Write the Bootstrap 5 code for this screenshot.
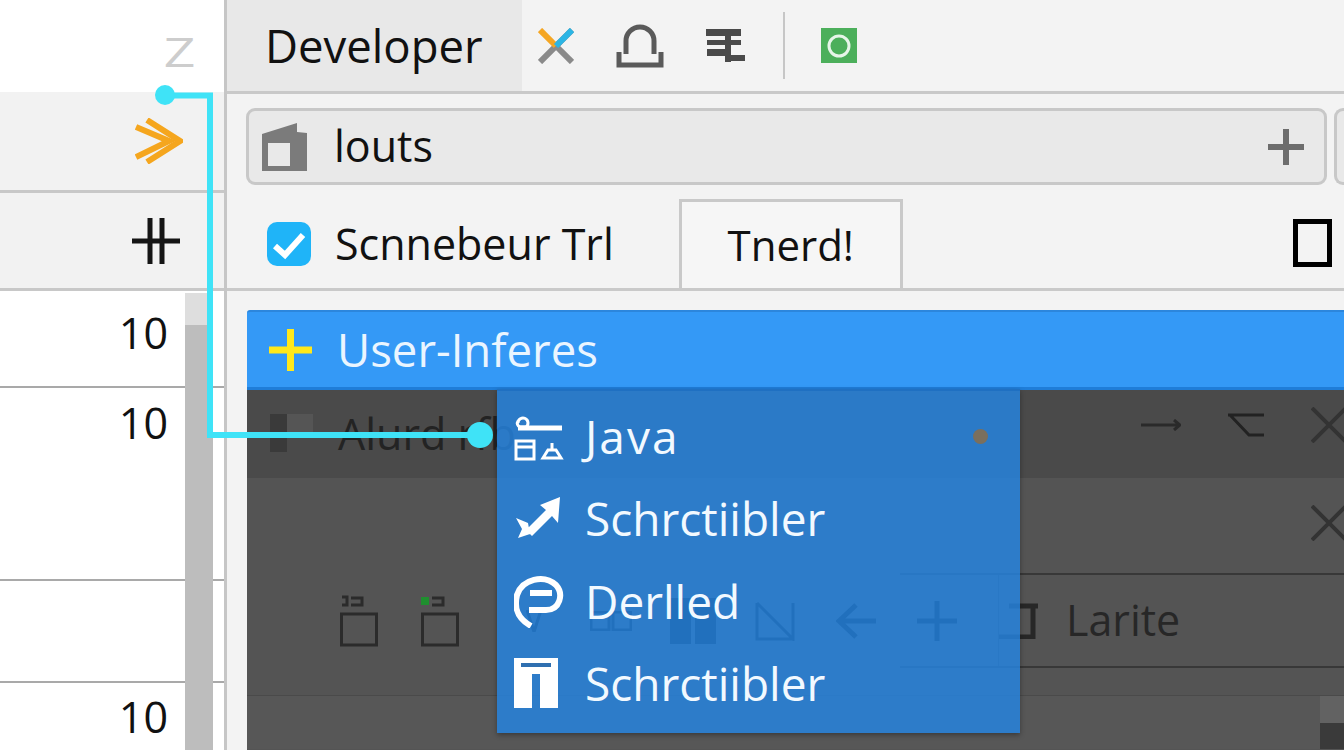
<!DOCTYPE html>
<html lang="en">
<head>
  <meta charset="UTF-8" />
  <meta name="viewport" content="width=device-width, initial-scale=1.0"/>
  <title>Developer</title>
  <link href="https://cdn.jsdelivr.net/npm/bootstrap@5.3.0/dist/css/bootstrap.min.css" rel="stylesheet"/>
  <style>
    html, body { height: 750px; overflow: hidden; }
    body { font-family: "Open Sans", "Noto Sans", sans-serif; background: #f3f3f3; color: #111; font-size: 43px; position: relative; }
    svg { display: block; flex: none; }
    .side-col { width: 224px; flex: none; position: relative; background: #fff; }
    .main-col { flex: 1; min-width: 0; border-left: 3px solid #c6c6c6; }
    .side-top { height: 92px; padding: 26px 29px 0 0; color: #cdcdcd; font-size: 41px; line-height: 50px; }
    .side-z { display: inline-block; transform: scaleX(1.35); transform-origin: right center; }
    .side-tool { background: #f2f2f2; border-bottom: 3px solid #c8c8c8; padding-right: 41px; }
    .side-tool.one { height: 101px; }
    .side-tool.two { height: 98px; padding-right: 44px; }
    .num-row { border-bottom: 2px solid #a9a9a9; padding: 14px 56px 0 0; line-height: 56px; font-size: 43px; }
    .num-row.r1 { height: 97px; }
    .num-row.r2 { height: 193px; padding-top: 7px; }
    .num-row.r3 { height: 102px; }
    .num-row.r4 { height: 70px; padding-top: 6px; border: 0; }
    .scroll-track { position: absolute; left: 185px; top: 293px; bottom: 0; width: 28px; background: #bdbdbd; }
    .scroll-track::before { content: ""; display: block; height: 32px; background: #dedede; }
    .top-bar { height: 94px; border-bottom: 3px solid #c9c9c9; }
    .dev-tab { width: 295px; background: #e8e8e8; padding-left: 38px; line-height: 91px; font-size: 45.5px; }
    .tool-sep { width: 2px; height: 67px; background: #c6c6c6; }
    .field-row { height: 91px; padding: 14px 0 0 19px; gap: 7px; }
    .field-box { height: 77px; background: #e9e9e9; border: 3px solid #c8c8c8; border-radius: 9px; }
    .field-box.wide { width: 1081px; padding: 0 20px 0 13px; }
    .field-box.rest { flex: 1; border-right: 0; border-radius: 9px 0 0 9px; }
    .field-label { margin-left: 26px; }
    .tab-row { height: 106px; border-bottom: 3px solid #c9c9c9; padding: 14px 12px 0 40px; }
    .tab-check { margin-right: 24px; margin-top: 23px; }
    .tab-label { margin-top: 13px; }
    .tab-box { width: 224px; height: 89px; margin-left: 65px; background: #f6f6f6; border: 3px solid #c9c9c9; border-bottom: 0; text-align: center; line-height: 86px; font-size: 42px; }
    .panel-wrap { padding: 19px 0 0 20px; }
    .blue-bar { height: 80px; background: #3499f6; border-top: 2px solid #2c86dc; border-bottom: 3px solid #1f7dd8; color: #eaf5ff; padding-left: 22px; gap: 25px; border-radius: 3px 0 0 0; font-size: 45.5px; }
    .dark-panel { position: relative; height: 361px; background: #545454; color: #232323; }
    .dark-title { height: 88px; background: #4a4a4a; padding-left: 23px; gap: 25px; }
    .title-right { margin-left: auto; gap: 47px; margin-right: -3px; margin-bottom: 18px; }
    .close-row { height: 95px; }
    .close-row svg { margin-right: -3px; margin-bottom: 6px; }
    .icon-row { height: 95px; padding-left: 93px; }
    .icon-row .cell { width: 81px; }
    .icon-row .cell:nth-child(3) { width: 88px; }
    .icon-row .cell:nth-child(4) { width: 80px; }
    .icon-row .cell:nth-child(5) { width: 85px; }
    .line-seg { flex: 1; align-self: stretch; margin-left: -17px; padding-left: 17px; border-top: 2px solid #383838; border-bottom: 2px solid #383838; }
    .line-cell { width: 82px; align-self: stretch; border-right: 1px solid #3c3c3c; }
    .larite { margin-left: 26px; color: #272727; font-size: 43px; }
    .foot-row { height: 28px; border-bottom: 1px solid #4a4a4a; }
    .foot-fill { height: 53px; background: #575757; }
    .foot-side { width: 24px; background: #3a3a3a; }
    .foot-side::before { content: ""; display: block; height: 27px; background: #626262; }
    .pop-menu { position: absolute; left: 250px; top: -1px; width: 523px; height: 344px; background: rgba(37, 133, 227, .82); border-top: 2px solid #1f70c2; box-shadow: 0 2px 5px rgba(0,0,0,.35); color: #f2f9ff; z-index: 3; font-size: 46px; }
    .pop-item { padding-left: 17px; gap: 21px; }
    .pop-item.a { height: 90px; }
    .pop-item.a span { letter-spacing: 2px; }
    .pop-item.b { height: 74px; }
    .pop-item.c { height: 92px; }
    .pop-item.d { height: 72px; }
    .pop-item .ico { width: 50px; }
    .pop-dot { margin-left: auto; margin-right: 32px; width: 15px; height: 15px; border-radius: 50%; background: #7a6f5d; }
    .wire { position: absolute; left: 0; top: 0; z-index: 2; pointer-events: none; }
  </style>
</head>
<body>
  <div class="d-flex">
    <div class="side-col">
      <div class="side-top text-end"><span class="side-z">Z</span></div>
      <div class="side-tool one d-flex align-items-center justify-content-end">
        <svg width="48" height="46" viewBox="0 0 48 46" fill="none" stroke="#f5a61e" stroke-width="6"><path d="M1 9 34 23 1 39"/><path d="M12 2 45 23 12 44"/></svg>
      </div>
      <div class="side-tool two d-flex align-items-center justify-content-end">
        <svg width="48" height="46" viewBox="0 0 48 46" fill="none" stroke="#151515" stroke-width="5"><path d="M0 23H48"/><path d="M18 0V46"/><path d="M30 0V46"/></svg>
      </div>
      <div class="num-row r1 text-end">10</div>
      <div class="num-row r2 text-end">10</div>
      <div class="num-row r3"></div>
      <div class="num-row r4 text-end">10</div>
      <div class="scroll-track"></div>
    </div>

    <div class="main-col">
      <div class="top-bar d-flex align-items-center">
        <div class="dev-tab align-self-stretch">Developer</div>
        <svg class="ms-3" width="36" height="36" viewBox="0 0 36 36" fill="none" stroke-width="6"><path d="M2 34 34 2" stroke="#8a8a8a"/><path d="M2 2 18 18" stroke="#f5a623"/><path d="M18 18 34 34" stroke="#8a8a8a"/><path d="M18 18 34 2" stroke="#2bb5e5"/></svg>
        <svg style="margin-left:42px" width="48" height="44" viewBox="0 0 48 44" fill="none" stroke="#5a5a5a" stroke-width="5"><path d="M10 30V17a14 14 0 0 1 28 0V30"/><path d="M3 28V41H45V28"/></svg>
        <svg style="margin-left:41px" width="40" height="36" viewBox="0 0 40 36" fill="#4a4a4a"><path d="M1 1H36V8H1ZM2 12H36V17H2ZM2 21H24V28H2ZM20 4H26V34H20ZM26 27H40V33H26Z"/></svg>
        <div class="tool-sep" style="margin-left:38px"></div>
        <svg style="margin-left:36px" width="36" height="35" viewBox="0 0 36 35"><rect width="36" height="35" fill="#4caf5b"/><circle cx="18" cy="18" r="10" fill="none" stroke="#e6f5e8" stroke-width="3"/></svg>
      </div>

      <div class="field-row d-flex">
        <div class="field-box wide d-flex align-items-center">
          <svg width="46" height="48" viewBox="0 0 46 48" fill="#7b7b7b"><path d="M0 11 35 0V9L45 10V48H0ZM6 20V43H28V20Z"/></svg>
          <span class="field-label">louts</span>
          <svg class="ms-auto" width="36" height="36" viewBox="0 0 36 36" fill="#6d6d6d"><path d="M15 0H21V15H36V21H21V36H15V21H0V15H15Z"/></svg>
        </div>
        <div class="field-box rest"></div>
      </div>

      <div class="tab-row d-flex align-items-start">
        <svg class="tab-check" width="44" height="44" viewBox="0 0 44 44"><rect width="44" height="44" rx="10" fill="#1fb4f8"/><path d="M8 24 18 33 36 13" fill="none" stroke="#fff" stroke-width="6"/></svg>
        <span class="tab-label">Scnnebeur Trl</span>
        <div class="tab-box">Tnerd!</div>
        <svg class="ms-auto" style="margin-top:20px" width="39" height="48" viewBox="0 0 39 48"><rect x="2.5" y="2.5" width="34" height="43" fill="none" stroke="#000" stroke-width="5"/></svg>
      </div>

      <div class="panel-wrap">
        <div class="blue-bar d-flex align-items-center">
          <svg width="43" height="42" viewBox="0 0 43 42" fill="#ffe81a"><path d="M18 0H25V17.500H43V24.500H25V42H18V24.500H0V17.500H18Z"/></svg>
          <span>User-Inferes</span>
        </div>
        <div class="dark-panel">
          <div class="dark-title d-flex align-items-center">
            <svg width="43" height="40" viewBox="0 0 43 40"><rect width="17" height="38" fill="#3a3a3a"/><rect x="17" width="26" height="22" fill="#555"/></svg>
            <span>Alurd rfb</span>
            <div class="title-right d-flex align-items-center">
              <svg width="40" height="12" viewBox="0 0 40 12" fill="none" stroke="#2a2a2a" stroke-width="3"><path d="M0 6H39M33 1 39 6 33 11"/></svg>
              <svg width="36" height="24" viewBox="0 0 36 24" fill="none" stroke="#222" stroke-width="3"><path d="M0 2H36M2 2 21 22H36"/></svg>
              <svg width="36" height="36" viewBox="0 0 36 36" fill="none" stroke="#333" stroke-width="4"><path d="M1 1 35 35M35 1 1 35"/></svg>
            </div>
          </div>
          <div class="close-row d-flex align-items-center justify-content-end">
            <svg width="36" height="36" viewBox="0 0 36 36" fill="none" stroke="#333" stroke-width="4"><path d="M1 1 35 35M35 1 1 35"/></svg>
          </div>
          <div class="icon-row d-flex align-items-center">
            <div class="cell"><svg width="38" height="52" viewBox="0 0 38 52" fill="none" stroke="#2b2b2b" stroke-width="3"><rect x="1.500" y="19" width="35" height="31"/><path d="M11 3H22V10H11M2 2H7V10H2"/></svg></div>
            <div class="cell"><svg width="38" height="52" viewBox="0 0 38 52" fill="none" stroke="#2b2b2b" stroke-width="3"><rect x="1.500" y="19" width="35" height="31"/><path d="M11 3H22V10H11"/><rect x="0" y="2" width="8" height="8" fill="#1f8f2f" stroke="none"/></svg></div>
            <div class="cell"><svg class="ms-4" width="16" height="22" viewBox="0 0 16 22" fill="none" stroke="#111" stroke-width="3"><path d="M1 0 8 22 15 0"/></svg></div>
            <div class="cell"><svg width="42" height="20" viewBox="0 0 42 20" fill="none" stroke="#111" stroke-width="3"><rect x="1" y="1" width="18" height="18"/><rect x="23" y="1" width="18" height="18"/></svg></div>
            <div class="cell"><svg width="46" height="46" viewBox="0 0 46 46" fill="#111"><rect width="21" height="46"/><rect x="25" width="21" height="46"/></svg></div>
            <div class="cell"><svg width="40" height="40" viewBox="0 0 40 40" fill="none" stroke="#111" stroke-width="3"><path d="M2 2 38 38V2M2 2V38H38"/></svg></div>
            <div class="cell"><svg width="40" height="36" viewBox="0 0 40 36" fill="none" stroke="#111" stroke-width="5"><path d="M40 18H3M20 2 3 18 20 34"/></svg></div>
            <div class="line-seg d-flex align-items-center">
              <div class="line-cell d-flex align-items-center"><svg width="40" height="40" viewBox="0 0 40 40" fill="none" stroke="#111" stroke-width="5"><path d="M20 0V40M0 20H40"/></svg></div>
              <svg width="41" height="36" viewBox="0 0 41 36" fill="none" stroke="#272727" stroke-width="5"><path d="M10 3H39L34 3V34H0"/></svg>
              <span class="larite">Larite</span>
            </div>
          </div>
          <div class="foot-row"></div>
          <div class="d-flex">
            <div class="foot-fill flex-grow-1"></div>
            <div class="foot-side"></div>
          </div>

          <div class="pop-menu">
            <div class="pop-item a d-flex align-items-center">
              <div class="ico"><svg width="50" height="50" viewBox="0 0 50 50" fill="none" stroke="#fff" stroke-width="3"><path d="M4 12a5 5 0 1 1 8 4H6a4 4 0 0 1-2-6"/><path d="M4 17H48" stroke-width="5"/><rect x="2" y="30" width="18" height="18"/><path d="M2 36H20"/><path d="M29 47H47L42 39H34ZM38 39V32"/></svg></div>
              <span>Java</span>
              <div class="pop-dot"></div>
            </div>
            <div class="pop-item b d-flex align-items-center">
              <div class="ico"><svg width="50" height="42" viewBox="0 0 50 42" fill="#fff"><path d="M46 0 44 26 38 19 18 39 12 33 32 13 26 8ZM2 21 14 26 16 37 4 41 8 32Z"/></svg></div>
              <span>Schrctiibler</span>
            </div>
            <div class="pop-item c d-flex align-items-center">
              <div class="ico"><svg width="50" height="54" viewBox="0 0 50 54" fill="none" stroke="#fff" stroke-width="6"><path d="M17 52C3 44 0 34 3 21 8 5 30 0 42 11c8 9 4 25-10 25H15"/><path d="M16 19H38"/></svg></div>
              <span>Derlled</span>
            </div>
            <div class="pop-item d d-flex align-items-center">
              <div class="ico"><svg width="44" height="50" viewBox="0 0 44 50"><path d="M0 0H44V50H26V16H18V50H0Z" fill="#fff"/><rect x="7" y="5" width="30" height="4" fill="#2f6fb0"/></svg></div>
              <span>Schrctiibler</span>
            </div>
          </div>
        </div>
      </div>
    </div>
  </div>

  <svg class="wire" width="500" height="460" viewBox="0 0 500 460" fill="none">
    <path d="M165 95.500H210V435H480" stroke="#3fe3f7" stroke-width="6"/>
    <circle cx="165" cy="95" r="10" fill="#3fe3f7"/>
    <circle cx="480" cy="435" r="13" fill="#3fe3f7"/>
  </svg>

  <script src="https://cdn.jsdelivr.net/npm/bootstrap@5.3.0/dist/js/bootstrap.bundle.min.js"></script>
</body>
</html>
